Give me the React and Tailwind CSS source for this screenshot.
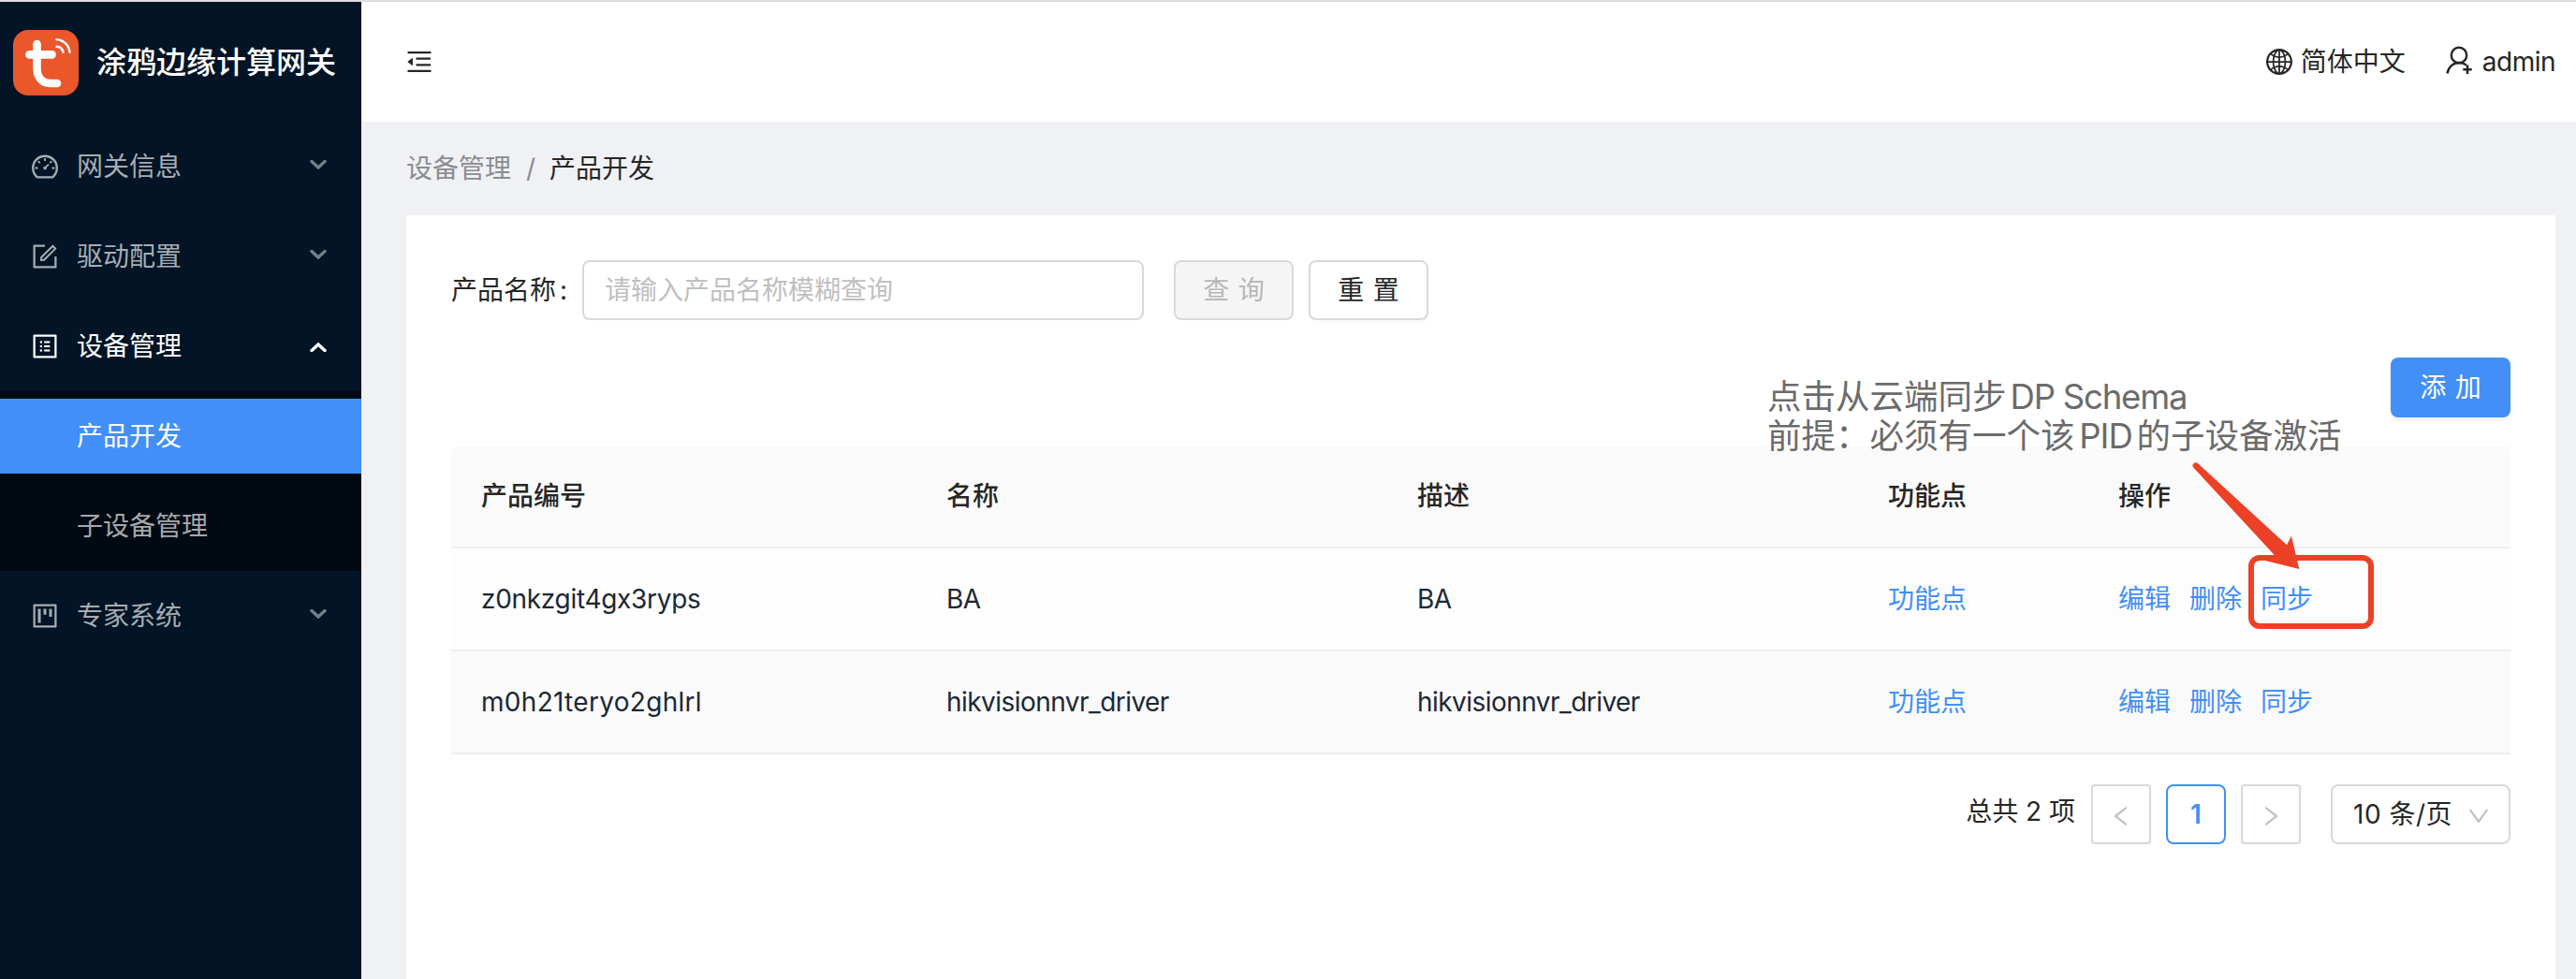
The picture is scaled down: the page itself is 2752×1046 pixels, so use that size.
import {
  AiOutlineDashboard,
  AiOutlineForm,
  AiOutlineProfile,
  AiOutlineProject,
  AiOutlineMenuFold,
  AiOutlineGlobal,
  AiOutlineLeft,
  AiOutlineRight,
  AiOutlineDown,
} from "react-icons/ai";

function Logo() {
  return (
    <svg viewBox="0 0 70 70" className="size-[70px] shrink-0">
      <rect width="70" height="70" rx="16" fill="#e9572b" />
      <g fill="none" stroke="#fff" strokeLinecap="round">
        <path d="M25.5 15v26c0 9 5 16 14 16h7.5" strokeWidth="8.6" />
        <path d="M17.5 26.4h24" strokeWidth="8.6" />
        <path d="M46.5 17.8a7.500 7.500 0 0 1 7 6" strokeWidth="2.4" />
        <path d="M46.5 10.2a15 15 0 0 1 14 13.6" strokeWidth="2.4" />
      </g>
    </svg>
  );
}

function UserAddIcon() {
  return (
    <svg viewBox="0 0 29 32" className="h-8 w-[29px]" fill="none" stroke="currentColor" strokeWidth="2.4">
      <circle cx="14" cy="10" r="8.2" />
      <path d="M1.500 29.500C2.500 22.500 8 18 14 18c3 0 5.500.8 8 2.500" />
      <path d="M18.300 25.200h9.400M23 20.500v9.400" strokeWidth="2.6" />
    </svg>
  );
}

function Chevron({ up }) {
  return (
    <svg
      viewBox="0 0 18 10"
      className={up ? "mt-0.5 h-2.5 w-[18px]" : "-mt-1 h-2.5 w-[18px] opacity-70"}
      fill="none"
      stroke="currentColor"
      strokeWidth="3.4"
      strokeLinecap="round"
    >
      <path d={up ? "M2 8.500 9 2l7 6.500" : "M2 1.500 9 8l7-6.500"} />
    </svg>
  );
}

function MenuItem({ icon: Icon, label, open }) {
  return (
    <div
      className={
        open
          ? "my-2 flex h-20 items-center pr-[37px] pl-8 text-white"
          : "my-2 flex h-20 items-center pr-[37px] pl-8 text-[#a6adb4]"
      }
    >
      <Icon className="size-8 shrink-0" />
      <span className="ml-[18px] flex-1">{label}</span>
      <Chevron up={open} />
    </div>
  );
}

const columns = "grid grid-cols-[497px_503px_503px_246px_1fr]";

function Row({ id, name, tint, idTracking }) {
  return (
    <div
      className={`${columns} h-[110px] items-center border-b-2 border-[#efefef] text-[#1c2736] ${tint}`}
    >
      <span className={`pl-8 ${idTracking}`}>{id}</span>
      <span className="pl-8 tracking-[-0.55px]">{name}</span>
      <span className="pl-8 tracking-[-0.55px]">{name}</span>
      <span className="pl-8 text-[#428ff7]">功能点</span>
      <span className="flex gap-5 pl-8 text-[#428ff7]">
        <span>编辑</span>
        <span>删除</span>
        <span>同步</span>
      </span>
    </div>
  );
}

export default function App() {
  return (
    <div className="relative flex h-[1046px] w-[2752px] flex-col overflow-hidden border-t-2 border-[#dcdce2] bg-[#f0f1f5] font-[Inter,'Noto_Sans_CJK_SC',sans-serif] text-[28px] leading-[44px] text-[#262626]">
      <div className="flex min-h-0 flex-1">
        <aside className="w-[386px] shrink-0 bg-[#021425]">
          <div className="flex h-32 items-center pt-0.5 pl-3.5">
            <Logo />
            <span className="ml-[19px] text-[32px] font-medium text-white">涂鸦边缘计算网关</span>
          </div>
          <nav className="flex flex-col">
            <MenuItem icon={AiOutlineDashboard} label="网关信息" />
            <MenuItem icon={AiOutlineForm} label="驱动配置" />
            <MenuItem icon={AiOutlineProfile} label="设备管理" open />
            <div className="flex flex-col gap-4 bg-[#010a12] py-2">
              <div className="flex h-20 items-center bg-[#428ff7] pl-[82px] text-white">
                产品开发
              </div>
              <div className="flex h-20 items-center pl-[82px] text-[#a6a8ab]">子设备管理</div>
            </div>
            <MenuItem icon={AiOutlineProject} label="专家系统" />
          </nav>
        </aside>

        <main className="flex min-w-0 flex-1 flex-col">
          <header className="flex h-32 shrink-0 items-center bg-white pr-[22px] pl-[46px]">
            <AiOutlineMenuFold className="size-8" />
            <div className="ml-auto flex items-center">
              <AiOutlineGlobal className="size-8" />
              <span className="ml-[7px]">简体中文</span>
              <span className="mt-[-3px] mr-2.5 ml-[43px]">
                <UserAddIcon />
              </span>
              <span className="tracking-[-0.5px]">admin</span>
            </div>
          </header>

          <div className="flex h-[100px] shrink-0 items-center pl-12 text-[#8b8c8e]">
            <span>设备管理</span>
            <span className="mr-[15px] ml-4">/</span>
            <span className="text-[#262626]">产品开发</span>
          </div>

          <section className="mr-[22px] ml-12 flex-1 bg-white px-12 pt-12">
            <div className="flex items-center">
              <span className="flex w-[140px] gap-1">
                产品名称<span>:</span>
              </span>
              <div className="flex h-16 w-[600px] items-center rounded-lg border-2 border-[#d9d9d9] pl-[22px] text-[#bfbfbf]">
                请输入产品名称模糊查询
              </div>
              <button className="ml-8 flex h-16 w-32 items-center justify-center rounded-lg border-2 border-[#d9d9d9] bg-[#f5f5f5] text-[#b8b8b8]">
                <span className="-mr-[0.34em] tracking-[0.34em]">查询</span>
              </button>
              <button className="ml-4 flex h-16 w-32 items-center justify-center rounded-lg border-2 border-[#d9d9d9] bg-white shadow-[0_4px_0_rgba(0,0,0,0.015)]">
                <span className="-mr-[0.34em] tracking-[0.34em]">重置</span>
              </button>
            </div>

            <div className="mt-10 flex justify-end">
              <button className="flex h-16 w-32 items-center justify-center rounded-lg bg-[#428ff7] text-white shadow-[0_4px_0_rgba(0,0,0,0.04)]">
                <span className="-mr-[0.34em] tracking-[0.34em]">添加</span>
              </button>
            </div>

            <div className="mt-[30px]">
              <div
                className={`${columns} h-[110px] items-center rounded-t-lg border-b-2 border-[#efefef] bg-[#fafafa] font-medium`}
              >
                <span className="pl-8">产品编号</span>
                <span className="pl-8">名称</span>
                <span className="pl-8">描述</span>
                <span className="pl-8">功能点</span>
                <span className="pl-8">操作</span>
              </div>
              <Row id="z0nkzgit4gx3ryps" name="BA" tint="bg-[#fdfdfd]" idTracking="tracking-[-0.3px]" />
              <Row id="m0h21teryo2ghlrl" name="hikvisionnvr_driver" tint="bg-[#fafafa]" idTracking="tracking-[0.3px]" />
            </div>

            <div className="mt-8 flex items-center justify-end">
              <span className="-mt-1.5 mr-[17px]">总共 2 项</span>
              <div className="flex size-16 items-center justify-center rounded border-2 border-[#d9d9d9] text-[#bfbfbf]">
                <AiOutlineLeft className="mt-[3px] size-7" />
              </div>
              <div className="ml-4 flex size-16 items-center justify-center rounded-lg border-2 border-[#428ff7] font-semibold text-[#428ff7]">
                1
              </div>
              <div className="ml-4 flex size-16 items-center justify-center rounded border-2 border-[#d9d9d9] text-[#bfbfbf]">
                <AiOutlineRight className="mt-[3px] size-7" />
              </div>
              <div className="ml-8 flex h-16 w-48 items-center justify-between rounded-lg border-2 border-[#d9d9d9] pr-[18px] pl-[22px]">
                <span className="tracking-[0.5px]">10 条/页</span>
                <AiOutlineDown className="mt-[3px] size-7 text-[#bfbfbf]" />
              </div>
            </div>
          </section>
        </main>
      </div>

      <div className="absolute top-[401px] left-[1888px] text-[36.5px] leading-[42px] whitespace-nowrap text-[#6b6b6b]">
        <div>
          点击从云端同步<span className="ml-1 tracking-[-1.2px]">DP Schema</span>
        </div>
        <div>
          前提：必须有一个该
          <span className="inline-block w-[66px] text-center tracking-[-1px]">PID</span>
          的子设备激活
        </div>
      </div>
      <div className="absolute top-[591px] left-[2402px] h-[79px] w-[134px] rounded-xl border-[6px] border-[#ec4127]" />
      <svg viewBox="0 0 130 130" className="absolute top-[488px] left-[2336px] size-[130px]">
        <path
          d="M6.800 9C5.300 6 9 2.500 12 5L107 92.300l5-9.600L120.300 118 84 109l10-5.700z"
          fill="#ec4127"
        />
      </svg>
    </div>
  );
}
